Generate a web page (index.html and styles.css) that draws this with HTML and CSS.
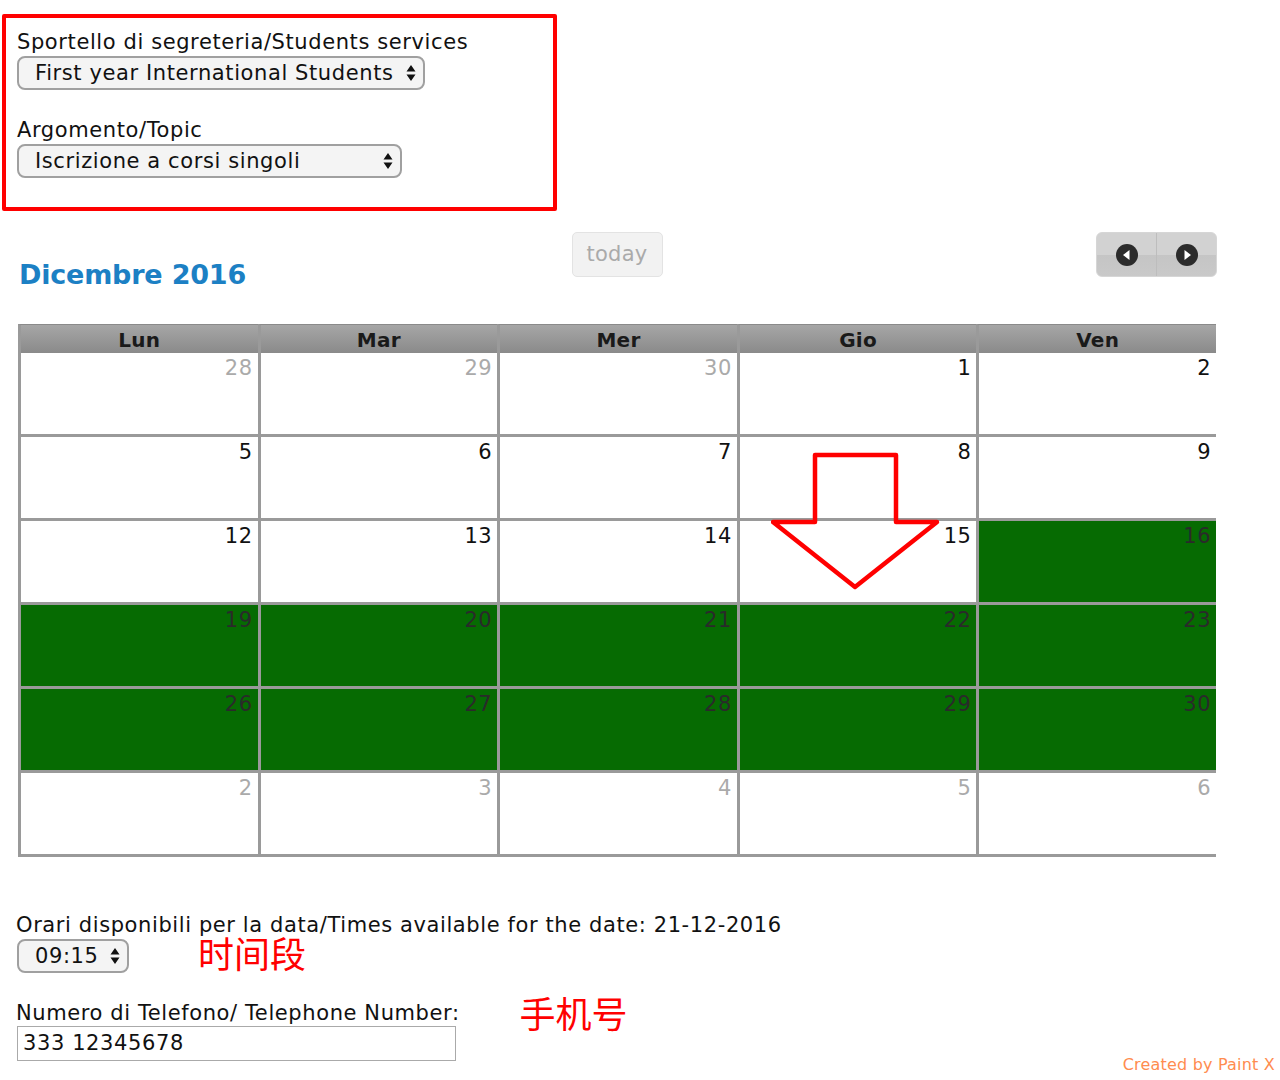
FILE: index.html
```html
<!DOCTYPE html>
<html lang="it">
<head>
<meta charset="utf-8">
<title>Prenotazione</title>
<link rel="stylesheet" href="styles.css">
</head>
<body>
<div class="form-box">
  <div class="label">Sportello di segreteria/Students services</div>
  <div class="select sel-1"><span>First year International Students</span><svg class="updown" viewBox="0 0 10 18" width="10" height="18"><path d="M5 1 L9.5 7.5 H0.5 Z M5 17 L9.5 10.5 H0.5 Z" fill="#111"/></svg></div>
  <div class="label label-2">Argomento/Topic</div>
  <div class="select sel-2"><span>Iscrizione a corsi singoli</span><svg class="updown" viewBox="0 0 10 18" width="10" height="18"><path d="M5 1 L9.5 7.5 H0.5 Z M5 17 L9.5 10.5 H0.5 Z" fill="#111"/></svg></div>
</div>

<div class="calendar">
  <div class="toolbar">
    <h2 class="title">Dicembre 2016</h2>
    <div class="today">today</div>
    <div class="nav">
      <div class="nav-btn"><svg viewBox="0 0 24 24" width="24" height="24"><circle cx="12" cy="12" r="11" fill="#2b2b2b"/><path d="M14.5 7 V17 L8 12 Z" fill="#fff"/></svg></div>
      <div class="nav-btn"><svg viewBox="0 0 24 24" width="24" height="24"><circle cx="12" cy="12" r="11" fill="#2b2b2b"/><path d="M9.5 7 V17 L16 12 Z" fill="#fff"/></svg></div>
    </div>
  </div>

  <div class="grid-wrap">
    <div class="grid">
      <div class="head">Lun</div><div class="head">Mar</div><div class="head">Mer</div><div class="head">Gio</div><div class="head">Ven</div>

      <div class="cell other">28</div><div class="cell other">29</div><div class="cell other">30</div><div class="cell">1</div><div class="cell">2</div>
      <div class="cell">5</div><div class="cell">6</div><div class="cell">7</div><div class="cell">8</div><div class="cell">9</div>
      <div class="cell">12</div><div class="cell">13</div><div class="cell">14</div><div class="cell">15</div><div class="cell avail">16</div>
      <div class="cell avail">19</div><div class="cell avail">20</div><div class="cell avail">21</div><div class="cell avail">22</div><div class="cell avail">23</div>
      <div class="cell avail">26</div><div class="cell avail">27</div><div class="cell avail">28</div><div class="cell avail">29</div><div class="cell avail">30</div>
      <div class="cell other">2</div><div class="cell other">3</div><div class="cell other">4</div><div class="cell other">5</div><div class="cell other">6</div>
    </div>
    <svg class="arrow" viewBox="0 0 180 145" width="180" height="145"><path d="M44 4 H125 V71 H166 L84 136 L2 71 H44 Z" fill="none" stroke="#ff0000" stroke-width="4.5" stroke-linejoin="round"/></svg>
  </div>
</div>

<div class="bottom">
  <div class="label">Orari disponibili per la data/Times available for the date: 21-12-2016</div>
  <div class="time-row">
    <div class="select sel-time"><span>09:15</span><svg class="updown" viewBox="0 0 10 18" width="10" height="18"><path d="M5 1 L9.5 7.5 H0.5 Z M5 17 L9.5 10.5 H0.5 Z" fill="#111"/></svg></div>
    <span class="note note-time">时间段</span>
  </div>
  <div class="phone-row">
    <span class="label">Numero di Telefono/ Telephone Number:</span>
    <span class="note note-phone">手机号</span>
  </div>
  <div class="input">333 12345678</div>
</div>

<div class="credit">Created by Paint X</div>
</body>
</html>
```
FILE: styles.css
```css
html, body {
  margin: 0;
  padding: 0;
  background: #fff;
}
body {
  font-family: "DejaVu Sans", Verdana, sans-serif;
  font-size: 21px;
  letter-spacing: 0.6px;
  color: #111;
  width: 1280px;
  height: 1080px;
  position: relative;
  overflow: hidden;
}

.form-box {
  margin: 14px 0 0 2px;
  width: 555px;
  height: 197px;
  box-sizing: border-box;
  border: 4px solid #ff0000;
  border-radius: 2px;
  padding: 12px 0 0 11px;
}
.label {
  line-height: 24px;
  height: 24px;
  white-space: nowrap;
}
.label-2 {
  margin-top: 28px;
}

.select {
  display: flex;
  align-items: center;
  justify-content: space-between;
  box-sizing: border-box;
  height: 34px;
  margin-top: 2px;
  border: 2px solid #a0a0a0;
  border-radius: 8px;
  background: #f4f4f4;
  padding: 0 7px 0 16px;
  white-space: nowrap;
}
.sel-1 { width: 408px; }
.sel-2 { width: 385px; }
.sel-time { width: 112px; }
.updown { flex: none; }

.calendar {
  margin: 21px 0 0 18px;
  width: 1198px;
}
.toolbar {
  display: grid;
  grid-template-columns: 1fr auto 1fr;
  align-items: start;
  height: 92px;
}
.title {
  margin: 25px 0 0 1px;
  font-size: 27px;
  line-height: 36px;
  font-weight: bold;
  color: #1c80c4;
  letter-spacing: -0.2px;
}
.today {
  box-sizing: border-box;
  width: 91px;
  height: 45px;
  line-height: 43px;
  text-align: center;
  border: 1px solid #e3e3e3;
  border-radius: 5px;
  background: #f2f2f2;
  color: #aaa;
  font-size: 21px;
  letter-spacing: 0.3px;
}
.nav {
  justify-self: end;
  display: flex;
  width: 121px;
  height: 45px;
  margin-right: -1px;
  border-radius: 6px;
  overflow: hidden;
  border: 1px solid #d6d6d6;
  box-sizing: border-box;
  background: linear-gradient(#d2d2d2 0%, #d2d2d2 50%, #c5c5c5 52%, #c9c9c9 100%);
}
.nav-btn {
  flex: 1;
  display: flex;
  align-items: center;
  justify-content: center;
}
.nav-btn + .nav-btn {
  border-left: 1px solid #bdbdbd;
}

.grid-wrap {
  position: relative;
}
.grid {
  display: grid;
  grid-template-columns: repeat(5, 1fr);
  grid-template-rows: 29px repeat(6, 84px);
}
.head {
  box-sizing: border-box;
  border-left: 3px solid #9a9a9a;
  border-top: 1px solid #8a8a8a;
  background: linear-gradient(#a6a6a6, #8a8a8a);
  text-align: center;
  font-weight: bold;
  font-size: 20px;
  letter-spacing: 0.3px;
  line-height: 31px;
  color: #1a1a1a;
}
.cell {
  box-sizing: border-box;
  border-left: 3px solid #9a9a9a;
  border-bottom: 3px solid #9a9a9a;
  text-align: right;
  padding: 3px 5px 0 0;
  line-height: 24px;
  color: #111;
  background: #fff;
  letter-spacing: 0.5px;
}
.cell.other {
  color: #aaa;
}
.cell.avail {
  background: #066b02;
  color: #2a2a2a;
}
.arrow {
  position: absolute;
  left: 753px;
  top: 127px;
}

.bottom {
  margin: 56px 0 0 16px;
}
.time-row {
  display: flex;
  align-items: center;
  margin-left: 1px;
}
.sel-time {
  margin-top: 2px;
}
.note {
  color: #ff0000;
  font-family: "Noto Sans CJK SC", sans-serif;
  font-size: 36px;
  line-height: 28px;
  letter-spacing: 0;
}
.note-time {
  margin-left: 69px;
  position: relative;
  top: -3px;
}
.phone-row {
  display: flex;
  align-items: flex-end;
  margin-top: 22px;
  height: 30px;
}
.note-phone {
  margin-left: 60px;
  position: relative;
  top: 1px;
}
.input {
  box-sizing: border-box;
  width: 439px;
  height: 35px;
  margin: 1px 0 0 1px;
  border: 1px solid #aaa;
  padding: 0 5px;
  line-height: 33px;
  font-size: 21px;
}

.credit {
  position: absolute;
  right: 5px;
  top: 1055px;
  color: #ff8c50;
  font-size: 16px;
  letter-spacing: 0.2px;
  line-height: 20px;
}
```
